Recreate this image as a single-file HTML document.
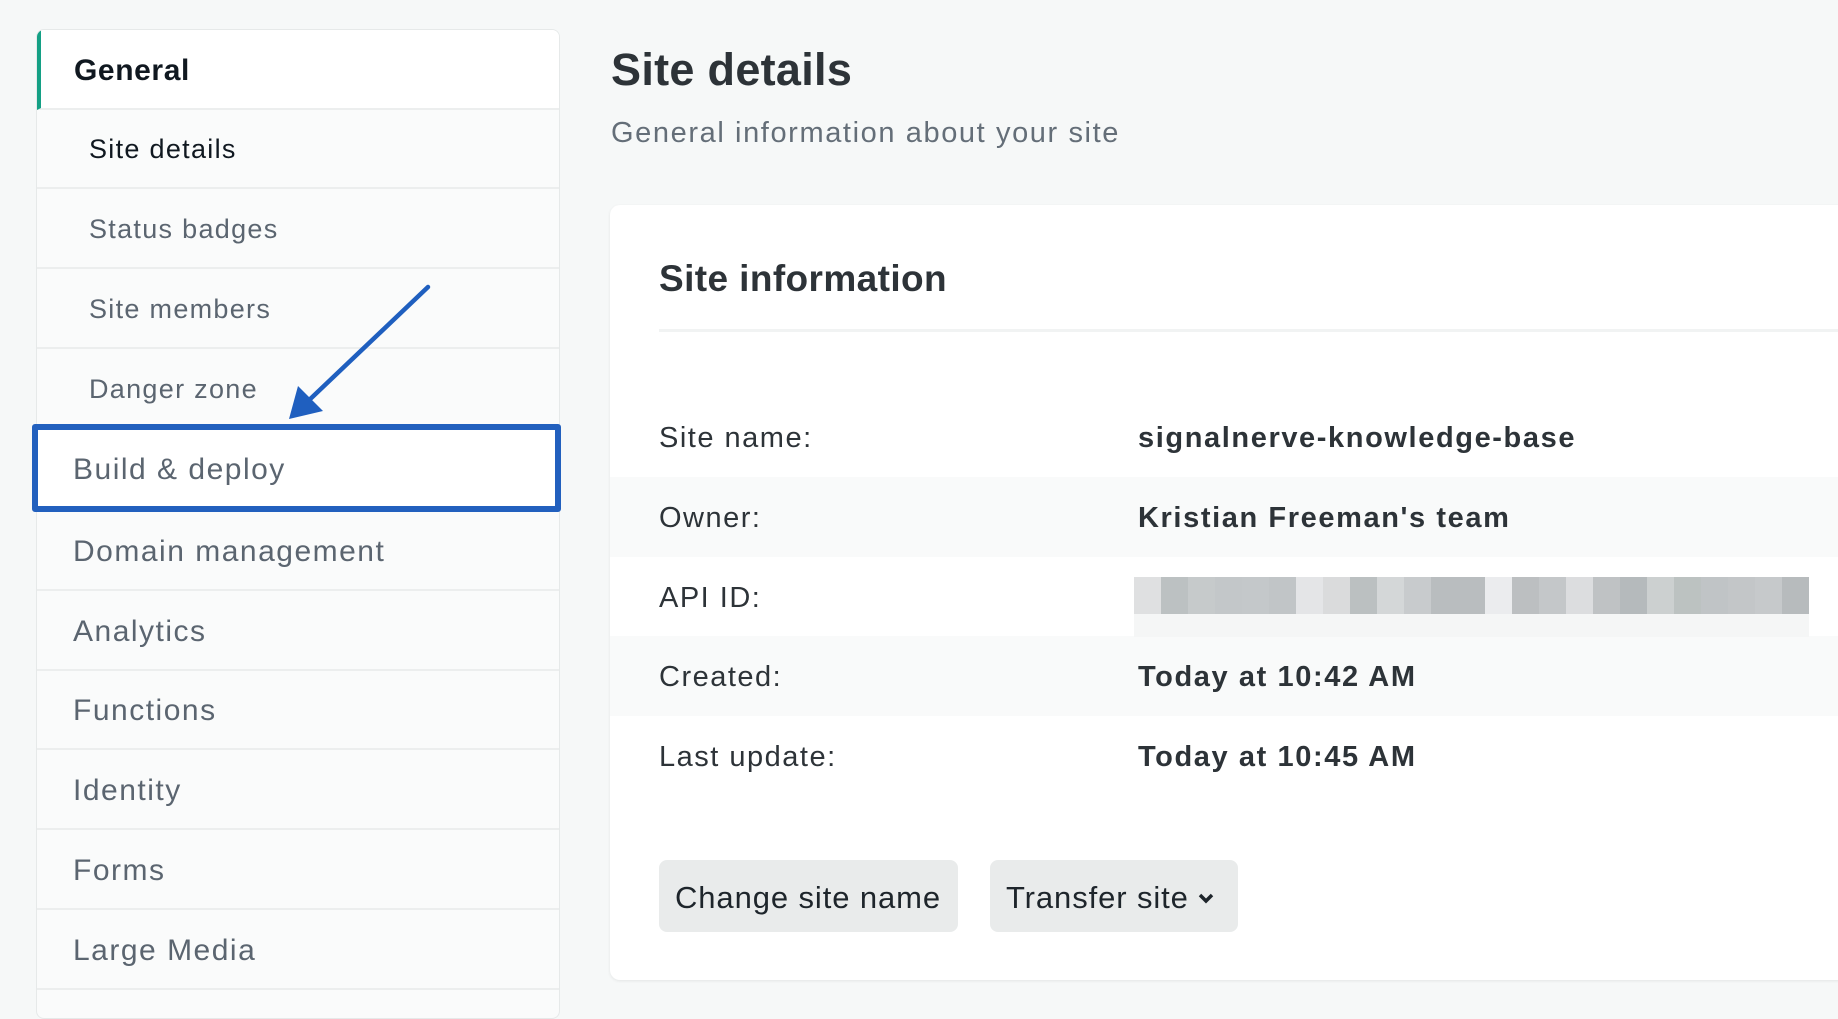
<!DOCTYPE html>
<html><head><meta charset="utf-8"><style>
*{margin:0;padding:0;box-sizing:border-box}
body{width:1838px;height:1004px;overflow:hidden;background:#f6f8f8;font-family:"Liberation Sans",sans-serif;position:relative;color:#2d3338}
.side{position:absolute;left:36px;top:29px;width:524px;height:990px;background:#fafbfb;border:1px solid #e6e9e9;border-radius:8px;overflow:hidden}
.it{position:absolute;left:0;width:100%;height:80px;border-bottom:2px solid #eceeee;display:flex;align-items:center;font-size:30px;color:#5b6570;padding-left:36px;letter-spacing:1.5px;padding-top:3px}
.sub{font-size:27px;padding-left:52px;color:#5b6570;letter-spacing:1.3px}
.gen{background:#fff;color:#101820;font-weight:bold;border-left:4px solid #14a085;padding-left:33px;letter-spacing:0.6px}
.abs{position:absolute}
.row{position:absolute;left:0;width:100%;height:80px;display:flex;align-items:center;font-size:29px;letter-spacing:1.5px;padding-top:3px}
.row .l{position:absolute;left:49px;color:#2d3338}
.row .v{position:absolute;left:528px;font-weight:bold;color:#2d3338;letter-spacing:1.6px}
.btn{position:absolute;top:655px;height:72px;background:#e9ebeb;border-radius:8px;font-size:31px;display:flex;align-items:center;padding-left:16px;color:#1e252b;letter-spacing:0.9px;padding-top:3px}
</style></head><body>
<div class="side">
<div class="it gen" style="top:0">General</div>
<div class="it sub" style="top:79px;color:#101820">Site details</div>
<div class="it sub" style="top:159px">Status badges</div>
<div class="it sub" style="top:239px">Site members</div>
<div class="it sub" style="top:319px">Danger zone</div>
<div class="it" style="top:399px;background:#fff">Build &amp; deploy</div>
<div class="it" style="top:481px">Domain management</div>
<div class="it" style="top:561px">Analytics</div>
<div class="it" style="top:640px">Functions</div>
<div class="it" style="top:720px">Identity</div>
<div class="it" style="top:800px">Forms</div>
<div class="it" style="top:880px">Large Media</div>
</div>
<div class="abs" style="left:32px;top:424px;width:529px;height:88px;border:6px solid #2260be;border-radius:3px"></div>
<svg class="abs" style="left:0;top:0" width="600" height="520"><line x1="428" y1="287" x2="305" y2="404" stroke="#1f5fbf" stroke-width="4.5" stroke-linecap="round"/><polygon points="289,419 298,386 323,411" fill="#1f5fbf"/></svg>
<div class="abs" style="left:611px;top:44px;font-size:45px;font-weight:bold;color:#2d3338;letter-spacing:0.3px">Site details</div>
<div class="abs" style="left:611px;top:117px;font-size:29px;color:#646e78;letter-spacing:1.6px">General information about your site</div>
<div class="abs" style="left:610px;top:205px;width:1260px;height:775px;background:#fff;border-radius:10px;box-shadow:0 1px 3px rgba(0,0,0,.08)">
<div class="abs" style="left:49px;top:53px;font-size:37px;font-weight:bold;color:#2d3338;letter-spacing:0.4px">Site information</div>
<div class="abs" style="left:49px;top:124px;width:1220px;height:3px;background:#f1f3f3"></div>
<div class="row" style="top:192px"><span class="l">Site name:</span><span class="v">signalnerve-knowledge-base</span></div>
<div class="row" style="top:272px;background:#f9fafa"><span class="l">Owner:</span><span class="v">Kristian Freeman's team</span></div>
<div class="row" style="top:352px"><span class="l">API ID:</span></div>
<div class="row" style="top:431px;background:#f9fafa"><span class="l">Created:</span><span class="v">Today at 10:42 AM</span></div>
<div class="row" style="top:511px"><span class="l">Last update:</span><span class="v">Today at 10:45 AM</span></div>
<div class="btn" style="left:49px;width:299px">Change site name</div>
<div class="btn" style="left:380px;width:248px">Transfer site <svg width="22" height="20" style="margin-left:6px" viewBox="0 0 22 20"><path d="M5 7l6 6 6-6" stroke="#1e252b" stroke-width="3.5" fill="none"/></svg></div>
</div>
<div class="abs" style="left:1134px;top:577px;display:flex">
<div style="width:27px;height:37px;background:#dfe0e1"></div><div style="width:27px;height:37px;background:#bcc1c2"></div><div style="width:27px;height:37px;background:#c6cacb"></div><div style="width:27px;height:37px;background:#c3c7c9"></div><div style="width:27px;height:37px;background:#c4c8ca"></div><div style="width:27px;height:37px;background:#c1c5c7"></div><div style="width:27px;height:37px;background:#e4e5e7"></div><div style="width:27px;height:37px;background:#dadbdc"></div><div style="width:27px;height:37px;background:#bbc0c1"></div><div style="width:27px;height:37px;background:#d4d7d8"></div><div style="width:27px;height:37px;background:#c8cbcd"></div><div style="width:27px;height:37px;background:#b9bdbf"></div><div style="width:27px;height:37px;background:#b9bdbf"></div><div style="width:27px;height:37px;background:#ebecee"></div><div style="width:27px;height:37px;background:#bcbfc1"></div><div style="width:27px;height:37px;background:#c4c7c9"></div><div style="width:27px;height:37px;background:#dcdddf"></div><div style="width:27px;height:37px;background:#bfc2c4"></div><div style="width:27px;height:37px;background:#b5babc"></div><div style="width:27px;height:37px;background:#ccd0d0"></div><div style="width:27px;height:37px;background:#bcc2c1"></div><div style="width:27px;height:37px;background:#c0c4c6"></div><div style="width:27px;height:37px;background:#c3c6c8"></div><div style="width:27px;height:37px;background:#c6c9cb"></div><div style="width:27px;height:37px;background:#b7bbbd"></div>
</div>
<div class="abs" style="left:1134px;top:614px;width:675px;height:23px;background:#f5f6f6"></div>
</body></html>
